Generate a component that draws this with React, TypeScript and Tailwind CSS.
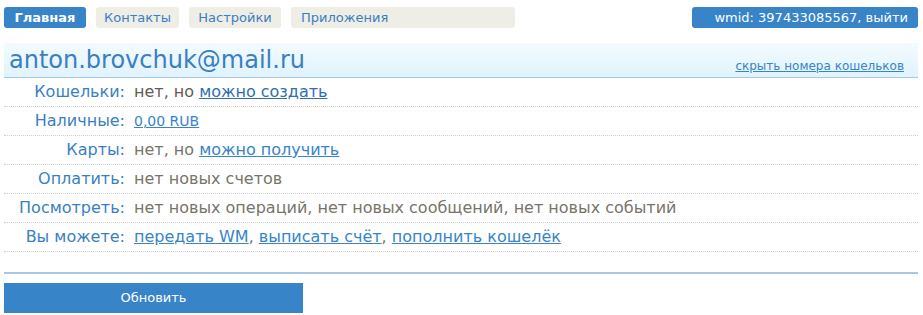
import React from "react";

const font = { fontFamily: '"DejaVu Sans", Verdana, sans-serif' };

const rows: { label: string; value: React.ReactNode }[] = [
  {
    label: "Кошельки:",
    value: (
      <>
        <span className="text-[#5f5c55]">нет, но </span>
        <a href="#" className="text-[#2f6fb0] underline">можно создать</a>
      </>
    ),
  },
  {
    label: "Наличные:",
    value: (
      <a href="#" className="text-[14px] text-[#3784c8] underline">0,00 RUB</a>
    ),
  },
  {
    label: "Карты:",
    value: (
      <>
        нет, но{" "}
        <a href="#" className="text-[#3784c8] underline">можно получить</a>
      </>
    ),
  },
  { label: "Оплатить:", value: "нет новых счетов" },
  {
    label: "Посмотреть:",
    value: "нет новых операций, нет новых сообщений, нет новых событий",
  },
  {
    label: "Вы можете:",
    value: (
      <>
        <a href="#" className="text-[#3784c8] underline">передать WM</a>,{" "}
        <a href="#" className="text-[#3784c8] underline">выписать счёт</a>,{" "}
        <a href="#" className="text-[#3784c8] underline">пополнить кошелёк</a>
      </>
    ),
  },
];

export default function App() {
  return (
    <div className="w-[923px] h-[315px] bg-white px-1 pt-[7px]" style={font}>
      <div className="flex items-center gap-[10px] w-[914px]">
        <div className="h-[21px] w-[82px] rounded-[3px] bg-[#3784c8] text-white font-bold text-[13px] flex items-center justify-center">
          Главная
        </div>
        <div className="h-[21px] w-[83px] rounded-[3px] bg-[#eeede6] text-[#3a7fc2] text-[13px] flex items-center justify-center">
          Контакты
        </div>
        <div className="h-[21px] w-[92px] rounded-[3px] bg-[#eeede6] text-[#3a7fc2] text-[13px] flex items-center justify-center">
          Настройки
        </div>
        <div className="h-[21px] w-[224px] rounded-[3px] bg-[#eeede6] text-[#3a7fc2] text-[13px] flex items-center pl-[10px]">
          Приложения
        </div>
        <div className="ml-auto h-[21px] w-[226px] rounded-[3px] bg-[#3784c8] text-white text-[13px] flex items-center justify-end pr-[10px]">
          wmid: 397433085567, выйти
        </div>
      </div>

      <div className="mt-[15px] w-[914px] h-[35px] bg-gradient-to-b from-[#f3fbff] to-[#e0f3fd] border-b border-[#a7c8e6] flex items-end justify-between px-[5px]">
        <div className="text-[24px] leading-none text-[#3a7fc2] pb-[5px]">anton.brovchuk@mail.ru</div>
        <a href="#" className="text-[12px] text-[#3784c8] underline pb-[2px] pr-[9px]">
          скрыть номера кошельков
        </a>
      </div>

      <div className="w-[914px]">
        {rows.map((r) => (
          <div
            key={r.label}
            className="flex items-center h-[29px] border-b border-dotted border-[#cfcfcf]"
          >
            <div className="w-[121px] text-right text-[16px] text-[#3a7fc2] whitespace-nowrap">{r.label}</div>
            <div className="pl-[9px] text-[16px] text-[#77756a] whitespace-nowrap">{r.value}</div>
          </div>
        ))}
      </div>

      <div className="mt-[20px] w-[914px] border-b-2 border-[#a7c8e6]" />

      <button className="mt-[9px] h-[30px] w-[299px] bg-[#3784c8] text-white text-[13px]">
        Обновить
      </button>
    </div>
  );
}
